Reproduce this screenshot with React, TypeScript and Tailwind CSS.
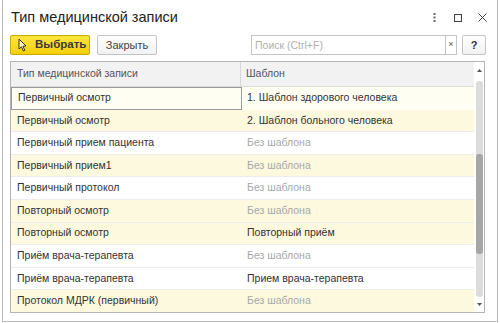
import React from 'react'

type Row = { kind: string; tpl: string | null; bg: 'sel' | 'y' | 'w' }

const ROWS: Row[] = [
  { kind: 'Первичный осмотр', tpl: '1. Шаблон здорового человека', bg: 'sel' },
  { kind: 'Первичный осмотр', tpl: '2. Шаблон больного человека', bg: 'y' },
  { kind: 'Первичный прием пациента', tpl: null, bg: 'w' },
  { kind: 'Первичный прием1', tpl: null, bg: 'y' },
  { kind: 'Первичный протокол', tpl: null, bg: 'w' },
  { kind: 'Повторный осмотр', tpl: null, bg: 'y' },
  { kind: 'Повторный осмотр', tpl: 'Повторный приём', bg: 'y' },
  { kind: 'Приём врача-терапевта', tpl: null, bg: 'w' },
  { kind: 'Приём врача-терапевта', tpl: 'Прием врача-терапевта', bg: 'w' },
  { kind: 'Протокол МДРК (первичный)', tpl: null, bg: 'y' },
]

function PointerIcon() {
  return (
    <svg width="9" height="14" viewBox="0 0 9 14" className="shrink-0">
      <path d="M1 1 L1 11 L3.5 8.8 L5.3 13 L6.8 12.3 L5 8.2 L8 8 Z" fill="#fff8b0" stroke="#333" strokeWidth="1" strokeLinejoin="round" />
    </svg>
  )
}

export default function App() {
  return (
    <div className="w-[500px] h-[323px] bg-white overflow-hidden font-['Liberation_Sans',Arial,sans-serif] text-[#333]">
      <div className="ml-[2px] w-[496px] h-[322px] border-x border-b border-[#bcbcbc] flex flex-col">
        {/* title bar */}
        <div className="flex items-center h-[17px] mt-[9px] pl-[8px]">
          <div className="text-[14.5px] leading-[17px] text-[#222] flex-1">Тип медицинской записи</div>
          <div className="flex items-center pr-[10px]">
            <svg width="3" height="9" viewBox="0 0 3 9">
              <rect x="0.5" y="0" width="2" height="2" fill="#666" />
              <rect x="0.5" y="3.5" width="2" height="2" fill="#666" />
              <rect x="0.5" y="7" width="2" height="2" fill="#666" />
            </svg>
            <svg width="8" height="8" viewBox="0 0 8 8" className="ml-[18px]">
              <rect x="0.5" y="0.5" width="7" height="7" fill="none" stroke="#444" strokeWidth="1.1" />
            </svg>
            <svg width="9" height="9" viewBox="0 0 9 9" className="ml-[16px]">
              <path d="M0.5 0.5 L8.5 8.5 M8.5 0.5 L0.5 8.5" stroke="#444" strokeWidth="1" />
            </svg>
          </div>
        </div>

        {/* toolbar */}
        <div className="flex items-center h-[20px] mt-[9px] pl-[7px]">
          <button className="flex items-center gap-[8px] w-[80px] h-[20px] pl-[7px] rounded-[2px] border border-[#c9ab00] bg-gradient-to-b from-[#ffe53a] to-[#f2d000] text-[11.5px] font-bold text-[#3a3a3a]">
            <PointerIcon />
            <span>Выбрать</span>
          </button>
          <button className="ml-[7px] w-[60px] h-[20px] rounded-[2px] border border-[#c4c4c4] bg-gradient-to-b from-white to-[#f1f1f1] text-[11px] text-[#444]">
            Закрыть
          </button>
          <div className="ml-[94px] flex w-[206px] h-[20px] border border-[#c4c4c4] bg-white">
            <div className="flex-1 pl-[3px] text-[10.5px] leading-[18px] text-[#b0b0b0]">Поиск (Ctrl+F)</div>
            <div className="w-[11px] border-l border-[#c4c4c4] flex items-center justify-center text-[9px] text-[#555]">×</div>
          </div>
          <button className="ml-[5px] w-[24px] h-[20px] rounded-[2px] border border-[#c4c4c4] bg-gradient-to-b from-white to-[#f1f1f1] text-[11px] font-bold text-[#333]">
            ?
          </button>
        </div>

        {/* table */}
        <div className="mt-[6px] ml-[7px] w-[475px] h-[252px] border border-[#b4b4b4] flex overflow-hidden">
          <div className="flex-1 flex flex-col">
            <div className="flex h-[25px] shrink-0 bg-[#f2f2f2] border-b border-[#dcdcdc] text-[10.5px] text-[#555]">
              <div className="w-[230px] pl-[6px] flex items-center border-r border-[#d8d8d8]">Тип медицинской записи</div>
              <div className="flex-1 pl-[5px] flex items-center">Шаблон</div>
            </div>
            {ROWS.map((r, i) => (
              <div
                key={i}
                className={`flex h-[22.6px] shrink-0 text-[10.5px] ${
                  r.bg === 'y' ? 'bg-[#fcf9df]' : r.bg === 'sel' ? 'bg-[#fffef2]' : 'bg-white'
                } ${r.bg === 'sel' ? '' : 'border-b border-[#ececec]'}`}
              >
                <div
                  className={`w-[231px] pl-[6px] flex items-center ${
                    r.bg === 'sel' ? 'border border-[#9a9a9a]' : ''
                  }`}
                >
                  {r.kind}
                </div>
                <div className={`flex-1 pl-[5px] flex items-center ${r.tpl ? 'text-[#333]' : 'text-[#a8a8a8]'}`}>
                  {r.tpl ?? 'Без шаблона'}
                </div>
              </div>
            ))}
          </div>
          {/* scrollbar */}
          <div className="w-[10px] flex flex-col items-center pt-[7px] pb-[6px]">
            <svg width="5" height="3" viewBox="0 0 5 3">
              <path d="M0 3 L2.5 0 L5 3 Z" fill="#555" />
            </svg>
            <div className="mt-[9px] w-[7px] flex-1 rounded-[3px] bg-[#dcdcdc] flex flex-col">
              <div className="h-[73px]" />
              <div className="h-[100px] rounded-[3px] bg-[#a6a6a6]" />
            </div>
            <svg width="5" height="3" viewBox="0 0 5 3" className="mt-[6px]">
              <path d="M0 0 L2.5 3 L5 0 Z" fill="#555" />
            </svg>
          </div>
        </div>
      </div>
    </div>
  )
}
